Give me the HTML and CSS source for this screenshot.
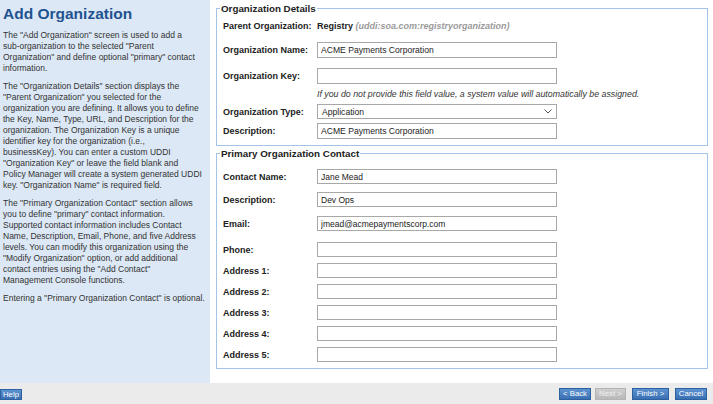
FILE: index.html
```html
<!DOCTYPE html>
<html>
<head>
<meta charset="utf-8">
<title>Add Organization</title>
<link rel="stylesheet" href="styles.css">
</head>
<body>
<div class="page">
  <div class="main">
    <aside class="sidebar">
      <h1 class="title">Add Organization</h1>
      <p>The "Add Organization" screen is used to add a<br>sub-organization to the selected "Parent<br>Organization" and define optional "primary" contact<br>information.</p>
      <p>The "Organization Details" section displays the<br>"Parent Organization" you selected for the<br>organization you are defining. It allows you to define<br>the Key, Name, Type, URL, and Description for the<br>organization. The Organization Key is a unique<br>identifier key for the organization (i.e.,<br>businessKey). You can enter a custom UDDI<br>"Organization Key" or leave the field blank and<br>Policy Manager will create a system generated UDDI<br>key. "Organization Name" is required field.</p>
      <p>The "Primary Organization Contact" section allows<br>you to define "primary" contact information.<br>Supported contact information includes Contact<br>Name, Description, Email, Phone, and five Address<br>levels. You can modify this organization using the<br>"Modify Organization" option, or add additional<br>contact entries using the "Add Contact"<br>Management Console functions.</p>
      <p>Entering a "Primary Organization Contact" is optional.</p>
    </aside>
    <section class="content">
      <fieldset class="group group-details">
        <legend>Organization Details</legend>
        <div class="row row-parent">
          <span class="label">Parent Organization:</span>
          <span class="value"><b>Registry</b> <i class="muted">(uddi:soa.com:registryorganization)</i></span>
        </div>
        <div class="row row-name">
          <label class="label">Organization Name:</label>
          <input class="field" type="text" value="ACME Payments Corporation">
        </div>
        <div class="row row-key">
          <label class="label">Organization Key:</label>
          <input class="field" type="text" value="">
        </div>
        <div class="row row-hint">
          <span class="label"></span>
          <i class="hint">If you do not provide this field value, a system value will automatically be assigned.</i>
        </div>
        <div class="row row-type">
          <label class="label">Organization Type:</label>
          <div class="field select">
            <span>Application</span>
            <svg class="chev" width="8" height="5" viewBox="0 0 8 5"><path d="M0.5 0.5 L4 4 L7.5 0.5" fill="none" stroke="#555" stroke-width="1"/></svg>
          </div>
        </div>
        <div class="row row-desc">
          <label class="label">Description:</label>
          <input class="field" type="text" value="ACME Payments Corporation">
        </div>
      </fieldset>

      <fieldset class="group group-contact">
        <legend>Primary Organization Contact</legend>
        <div class="row c-name">
          <label class="label">Contact Name:</label>
          <input class="field small" type="text" value="Jane Mead">
        </div>
        <div class="row c-desc">
          <label class="label">Description:</label>
          <input class="field small" type="text" value="Dev Ops">
        </div>
        <div class="row c-email">
          <label class="label">Email:</label>
          <input class="field small" type="text" value="jmead@acmepaymentscorp.com">
        </div>
        <div class="row c-phone">
          <label class="label">Phone:</label>
          <input class="field small" type="text" value="">
        </div>
        <div class="row c-addr">
          <label class="label">Address 1:</label>
          <input class="field small" type="text" value="">
        </div>
        <div class="row c-addr">
          <label class="label">Address 2:</label>
          <input class="field small" type="text" value="">
        </div>
        <div class="row c-addr">
          <label class="label">Address 3:</label>
          <input class="field small" type="text" value="">
        </div>
        <div class="row c-addr">
          <label class="label">Address 4:</label>
          <input class="field small" type="text" value="">
        </div>
        <div class="row c-addr">
          <label class="label">Address 5:</label>
          <input class="field small" type="text" value="">
        </div>
      </fieldset>
    </section>
  </div>
  <footer class="bar">
    <button class="btn btn-help">Help</button>
    <div class="nav">
      <button class="btn btn-back">&lt; Back</button>
      <button class="btn btn-next" disabled>Next &gt;</button>
      <button class="btn btn-finish">Finish &gt;</button>
      <button class="btn btn-cancel">Cancel</button>
    </div>
  </footer>
</div>
</body>
</html>
```

FILE: styles.css
```css
* { box-sizing: border-box; }
html, body { margin: 0; padding: 0; }
body {
  font-family: "Liberation Sans", Arial, sans-serif;
  color: #333;
  background: #fff;
}
.page {
  width: 713px;
  height: 404px;
  display: flex;
  flex-direction: column;
  overflow: hidden;
}
.main {
  height: 383px;
  display: flex;
}
.sidebar {
  width: 210px;
  flex: none;
  background: #dce8f5;
  padding: 5px 0 0 3px;
  font-size: 8.5px;
  line-height: 11px;
  color: #333;
  white-space: nowrap;
}
.title {
  margin: 0 0 8px;
  font-size: 15.5px;
  line-height: 17px;
  font-weight: bold;
  color: #1f5391;
}
.sidebar p { margin: 0 0 7px; }

.content {
  flex: 1;
  padding: 3px 5px 0 6px;
}
.group {
  margin: 0;
  border: 1px solid #a3c4e6;
  padding: 0 0 6px 6px;
  min-width: 0;
}
.group legend {
  margin-left: -3px;
  padding: 0 1px;
  font-size: 9.8px;
  font-weight: bold;
  line-height: 11px;
  color: #222;
}
.group-contact { margin-top: 2px; }

.row {
  display: flex;
  align-items: center;
  height: 16px;
}
.label {
  width: 94px;
  flex: none;
  font-size: 9px;
  font-weight: bold;
  color: #222;
}
.value { font-size: 9px; color: #222; }
.muted { color: #9a9a9a; font-weight: bold; }
.field {
  width: 240px;
  height: 16px;
  border: 1px solid #a8a8a8;
  padding: 0 3px;
  margin: 0;
  font-family: "Liberation Sans", Arial, sans-serif;
  font-size: 8.6px;
  color: #222;
  background: #fff;
  outline: none;
}
.field.small { height: 15px; font-size: 8.5px; }
.select {
  display: flex;
  align-items: center;
  justify-content: space-between;
  padding: 0 4px 0 4px;
  height: 15px;
}
.chev { display: block; }
.hint {
  font-size: 8.8px;
  color: #333;
  white-space: nowrap;
}

.row-parent { height: 12px; margin-top: 6px; }
.row-name { margin-top: 10px; }
.row-key { margin-top: 10px; }
.row-hint { height: 11px; margin-top: 4px; }
.row-type { height: 15px; margin-top: 5px; }
.row-desc { margin-top: 4px; }

.group-contact .row { height: 15px; }
.c-name { margin-top: 10px; }
.c-desc { margin-top: 8px; }
.c-email { margin-top: 9px; }
.c-phone { margin-top: 11px; }
.c-addr { margin-top: 6px; }

.bar {
  height: 21px;
  background: #ebebeb;
  display: flex;
  justify-content: space-between;
  align-items: flex-start;
  padding: 5px 6px 0 0;
}
.nav { display: flex; }
.btn {
  height: 12px;
  padding: 0;
  margin: 0;
  border: 1px solid #2d609f;
  background: linear-gradient(#5e93d2, #3a70b3);
  color: #fff;
  font-family: "Liberation Sans", Arial, sans-serif;
  font-size: 7.8px;
  line-height: 10px;
  text-align: center;
}
.btn-help { width: 22px; height: 11px; margin-top: 1px; }
.btn-back { width: 32px; }
.btn-next {
  width: 31px;
  margin-left: 4px;
  background: linear-gradient(#cfcfcf, #b9b9b9);
  border-color: #b3b3b3;
  color: #f2f2f2;
}
.btn-finish { width: 37px; margin-left: 6px; }
.btn-cancel { width: 32px; margin-left: 6px; }
```
